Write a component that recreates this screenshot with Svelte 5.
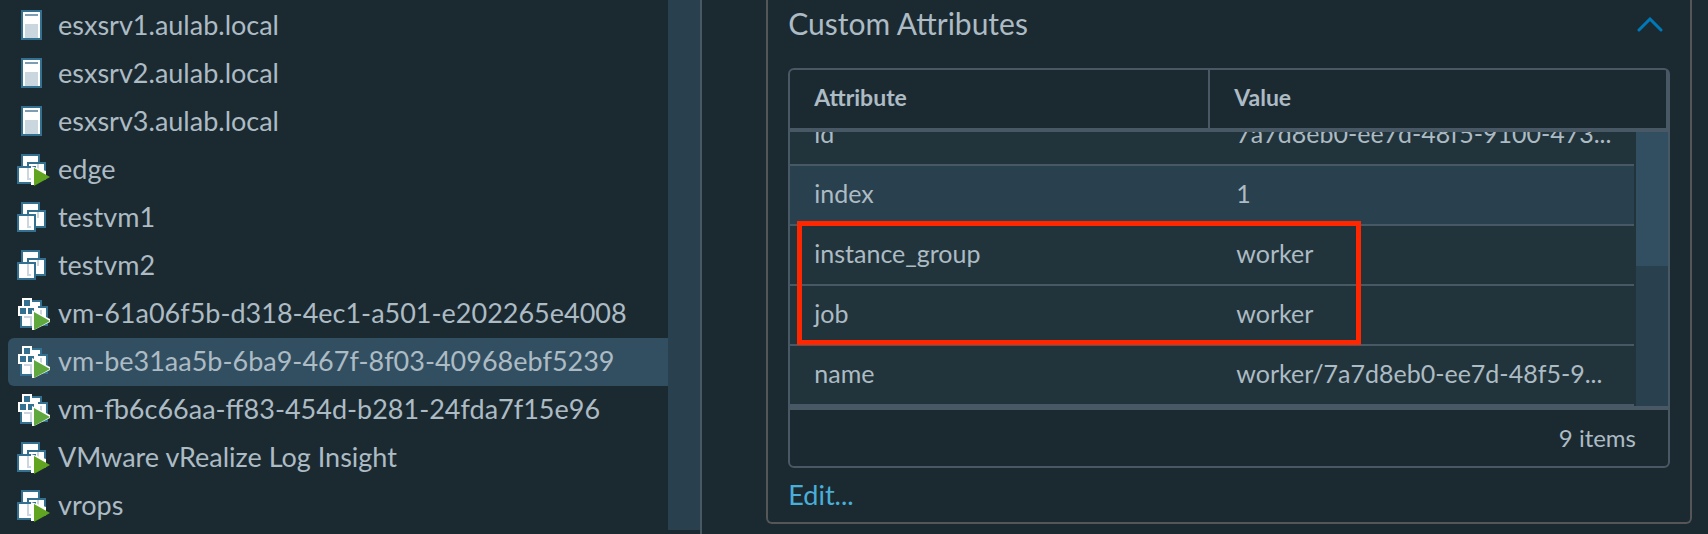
<script lang="ts">
  type Kind = 'host' | 'vm' | 'vm-on' | 'node-on';

  const inventory: { name: string; kind: Kind }[] = [
    { name: 'esxsrv1.aulab.local', kind: 'host' },
    { name: 'esxsrv2.aulab.local', kind: 'host' },
    { name: 'esxsrv3.aulab.local', kind: 'host' },
    { name: 'edge', kind: 'vm-on' },
    { name: 'testvm1', kind: 'vm' },
    { name: 'testvm2', kind: 'vm' },
    { name: 'vm-61a06f5b-d318-4ec1-a501-e202265e4008', kind: 'node-on' },
    { name: 'vm-be31aa5b-6ba9-467f-8f03-40968ebf5239', kind: 'node-on' },
    { name: 'vm-fb6c66aa-ff83-454d-b281-24fda7f15e96', kind: 'node-on' },
    { name: 'VMware vRealize Log Insight', kind: 'vm-on' },
    { name: 'vrops', kind: 'vm-on' }
  ];

  const attributes = [
    { name: 'id', value: '7a7d8eb0-ee7d-48f5-9100-473...' },
    { name: 'index', value: '1' },
    { name: 'instance_group', value: 'worker' },
    { name: 'job', value: 'worker' },
    { name: 'name', value: 'worker/7a7d8eb0-ee7d-48f5-9...' }
  ];

  const total = 9;

  let selected = $state('vm-be31aa5b-6ba9-467f-8f03-40968ebf5239');
  let activeRow = $state('index');
  let open = $state(true);
</script>

{#snippet icon(kind: Kind)}
  <svg class="icon" viewBox="0 0 34 32" aria-hidden="true">
    {#if kind === 'host'}
      <rect x="5" y="0" width="21" height="30" fill="#34708f" />
      <rect x="7" y="2" width="17" height="26" fill="#fff" />
      <rect x="9" y="4" width="13" height="2" fill="#7c9db3" />
      <rect x="9" y="14" width="13" height="14" fill="#cbd7de" />
    {:else if kind === 'node-on'}
      <path d="M14 2h12v6h6v20H20v2H4V16h10z" fill="#34708f" />
      <path d="M16 4h8v4h-2v2h8v16H20v2H6V17h10z" fill="#fff" />
      <path d="M8 18h8v10h-2v-8H8zM24 12h2v8h-2z" fill="#cbd7de" />
      <path d="M6 0h10v8h4v10H2V8h4z" fill="#fff" />
      <path d="M8 2h6v6H8zM4 10h6v6H4zM12 10h6v6h-6z" fill="#34708f" />
      <path d="M16 12l18 9v3l-16 8h-2z" fill="#fff" />
      <path d="M18 14l16 9-16 9z" fill="#5fa83d" />
    {:else}
      <rect x="5" y="0" width="19" height="16" fill="#34708f" />
      <rect x="7" y="2" width="15" height="12" fill="#fff" />
      <rect x="11" y="8" width="19" height="18" fill="#34708f" />
      <rect x="13" y="10" width="15" height="14" fill="#fff" />
      <path d="M21 10h2v6h-2z" fill="#cbd7de" />
      <rect x="1" y="12" width="19" height="18" fill="#34708f" />
      <rect x="3" y="14" width="15" height="14" fill="#fff" />
      <path d="M11 14h2v10h2v2h-4z" fill="#cbd7de" />
      {#if kind === 'vm-on'}
        <path d="M15 12l15 5v5l-12 9h-3z" fill="#fff" />
        <path d="M18 14l16 9-16 9z" fill="#60a41f" />
      {/if}
    {/if}
  </svg>
{/snippet}

<div class="page">
  <nav class="sidebar" aria-label="Inventory">
    <ul>
      {#each inventory as item (item.name)}
        <li>
          <button
            class="node"
            class:selected={item.name === selected}
            onclick={() => (selected = item.name)}
          >
            {@render icon(item.kind)}
            <span>{item.name}</span>
          </button>
        </li>
      {/each}
    </ul>
    <div class="track"></div>
  </nav>

  <main>
    <section class="card">
      <header>
        <h2>Custom Attributes</h2>
        <button class="toggle" aria-label="Toggle Custom Attributes" onclick={() => (open = !open)}>
          <svg class:closed={!open} viewBox="0 0 26 16" aria-hidden="true">
            <path d="M2 13L13 2l11 11" fill="none" stroke="#0079b8" stroke-width="3" stroke-linecap="round" />
          </svg>
        </button>
      </header>

      {#if open}
        <div class="datagrid">
          <table>
            <thead>
              <tr>
                <th scope="col">Attribute</th>
                <th scope="col">Value</th>
              </tr>
            </thead>
            <tbody>
              {#each attributes as attr (attr.name)}
                <tr class:active={attr.name === activeRow} onclick={() => (activeRow = attr.name)}>
                  <td>{attr.name}</td>
                  <td>{attr.value}</td>
                </tr>
              {/each}
            </tbody>
          </table>
          <div class="scrollbar"><div class="thumb"></div></div>
          <div class="highlight"></div>
          <footer>{total} items</footer>
        </div>
        <a class="edit" href="#edit">Edit...</a>
      {/if}
    </section>
  </main>
</div>

<style>
  :global(body) {
    background: #1b2a31;
  }

  .page {
    display: flex;
    min-height: 100vh;
    overflow: hidden;
    color: #adbbc4;
    background: #1b2a31;
    font-family: Lato, 'Open Sans', sans-serif;
    font-size: 27px;
  }

  button {
    border: 0;
    padding: 0;
    background: none;
    color: inherit;
    font: inherit;
    cursor: pointer;
  }

  .sidebar {
    display: flex;
    flex: 0 0 41%;
    border-right: 2px solid #495865;
  }

  ul {
    flex: 1;
    min-width: 0;
    margin: 0;
    padding: 2px 0 0 8px;
    list-style: none;
  }

  .node {
    display: flex;
    align-items: center;
    gap: 8px;
    width: 100%;
    height: 48px;
    padding-left: 8px;
    border-radius: 6px 0 0 6px;
    text-align: left;
    white-space: nowrap;
  }

  .node.selected {
    background: #324f62;
  }

  .node span {
    padding-bottom: 4px;
  }

  .icon {
    flex: none;
    width: 34px;
    height: 32px;
  }

  .track {
    width: 32px;
    margin-bottom: 4px;
    background: #29404e;
  }

  main {
    flex: 1;
    min-width: 0;
    padding: 0 16px 10px 64px;
  }

  .card {
    border: 2px solid #565656;
    border-top: 0;
    border-radius: 0 0 6px 6px;
    padding: 0 20px 12px;
  }

  header {
    display: flex;
    align-items: center;
    justify-content: space-between;
    height: 50px;
    margin-bottom: 18px;
  }

  h2 {
    margin: 0;
    padding-bottom: 4px;
    font-size: 30px;
    font-weight: 400;
  }

  .toggle {
    display: flex;
    padding: 0 7px;
  }

  .toggle svg {
    width: 26px;
    height: 16px;
  }

  .toggle svg.closed {
    transform: rotate(180deg);
  }

  .datagrid {
    position: relative;
    display: grid;
    grid-template-columns: 1fr;
    border: 2px solid #495865;
    border-radius: 6px;
  }

  table,
  thead {
    display: block;
  }

  tbody {
    display: flex;
    flex-direction: column;
    justify-content: flex-end;
    height: 274px;
    overflow: hidden;
    background: #22343b;
    font-size: 25px;
  }

  tr {
    display: grid;
    grid-template-columns: 420px 1fr;
  }

  th {
    padding: 0 24px 4px;
    border-right: 2px solid #495865;
    font-size: 23px;
    line-height: 54px;
    text-align: left;
  }

  thead {
    border-bottom: 4px solid #495865;
  }

  tbody tr {
    flex: none;
    margin-right: 34px;
    border-bottom: 2px solid #495865;
  }

  tbody tr.active {
    background: #29404e;
  }

  td {
    overflow: hidden;
    padding: 0 0 4px 24px;
    line-height: 54px;
    white-space: nowrap;
  }

  td + td {
    padding-left: 26px;
  }

  /* sits over the right edge of the scrolling rows */
  .scrollbar {
    position: absolute;
    top: 62px;
    right: 0;
    width: 32px;
    height: 274px;
    background: #29404e;
  }

  .thumb {
    height: 49%;
    background: #324f62;
  }

  .highlight {
    position: absolute;
    top: 151px;
    left: 7px;
    width: 564px;
    height: 124px;
    box-sizing: border-box;
    border: 5px solid #ff2600;
    pointer-events: none;
  }

  footer {
    padding-right: 32px;
    border-top: 4px solid #495865;
    font-size: 24px;
    line-height: 56px;
    text-align: right;
  }

  .edit {
    display: block;
    margin-top: 12px;
    color: #49afd9;
    line-height: 30px;
    text-decoration: none;
  }
</style>
